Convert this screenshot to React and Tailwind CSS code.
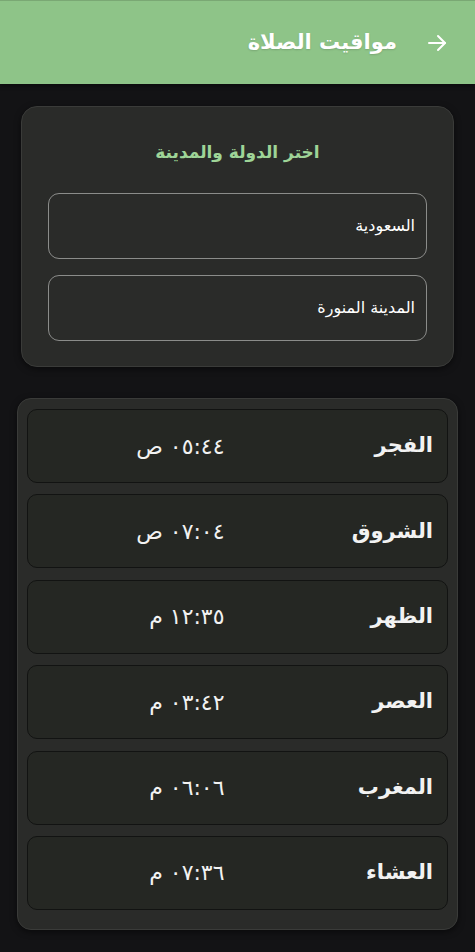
import React from "react";

const prayers = [
  ["الفجر", "٠٥:٤٤ ص"],
  ["الشروق", "٠٧:٠٤ ص"],
  ["الظهر", "١٢:٣٥ م"],
  ["العصر", "٠٣:٤٢ م"],
  ["المغرب", "٠٦:٠٦ م"],
  ["العشاء", "٠٧:٣٦ م"],
];

export default function App() {
  return (
    <div
      dir="rtl"
      className="w-[475px] h-[952px] bg-[#131315] flex flex-col"
      style={{ fontFamily: '"DejaVu Sans", "Noto Sans", sans-serif' }}
    >
      <header className="h-[84px] bg-[#8ec488] border-t border-[#7aa874] flex items-center pr-[26px] gap-[28px] shadow-[0_2px_4px_rgba(0,0,0,0.4)]">
        <svg width="24" height="24" viewBox="0 0 24 24" fill="none" stroke="#ffffff" strokeWidth="2" strokeLinecap="round" strokeLinejoin="round">
          <path d="M4 12h16" />
          <path d="M13 5l7 7-7 7" />
        </svg>
        <h1 className="text-white text-[21px] font-bold [text-shadow:0_1px_2px_rgba(0,0,0,0.15)]">مواقيت الصلاة</h1>
      </header>

      <div className="px-[21px] pt-[22px]">
        <div className="bg-[#2a2b29] border border-[#3a3b39] rounded-[16px] h-[261px] px-[26px] pt-[33px] flex flex-col shadow-[0_2px_6px_rgba(0,0,0,0.5)]">
          <h2 className="text-center text-[#9ed497] text-[17px] font-bold leading-[24px]">اختر الدولة والمدينة</h2>
          <div className="mt-[29px] h-[66px] border border-[#8b8c8a] rounded-[11px] flex items-center pr-[11px] text-white text-[16px]">
            السعودية
          </div>
          <div className="mt-[16px] h-[66px] border border-[#8b8c8a] rounded-[11px] flex items-center pr-[11px] text-white text-[16px]">
            المدينة المنورة
          </div>
        </div>
      </div>

      <div className="px-[17px] pt-[31px]">
        <div className="bg-[#2a2b29] border border-[#3a3b39] rounded-[14px] pt-[10px] pb-[19px] px-[9px] flex flex-col gap-[11.4px] shadow-[0_2px_6px_rgba(0,0,0,0.5)]">
          {prayers.map(([name, time]) => (
            <div
              key={name}
              className="h-[74px] bg-[#252723] border border-[#121312] rounded-[10px] grid grid-cols-2 gap-[26px] px-[14px] items-center"
            >
              <div className="text-right text-[#f2f2f2] text-[21px] font-bold">{name}</div>
              <div className="text-right text-[#f2f2f2] text-[22px] tracking-[2px]">{time}</div>
            </div>
          ))}
        </div>
      </div>
    </div>
  );
}
